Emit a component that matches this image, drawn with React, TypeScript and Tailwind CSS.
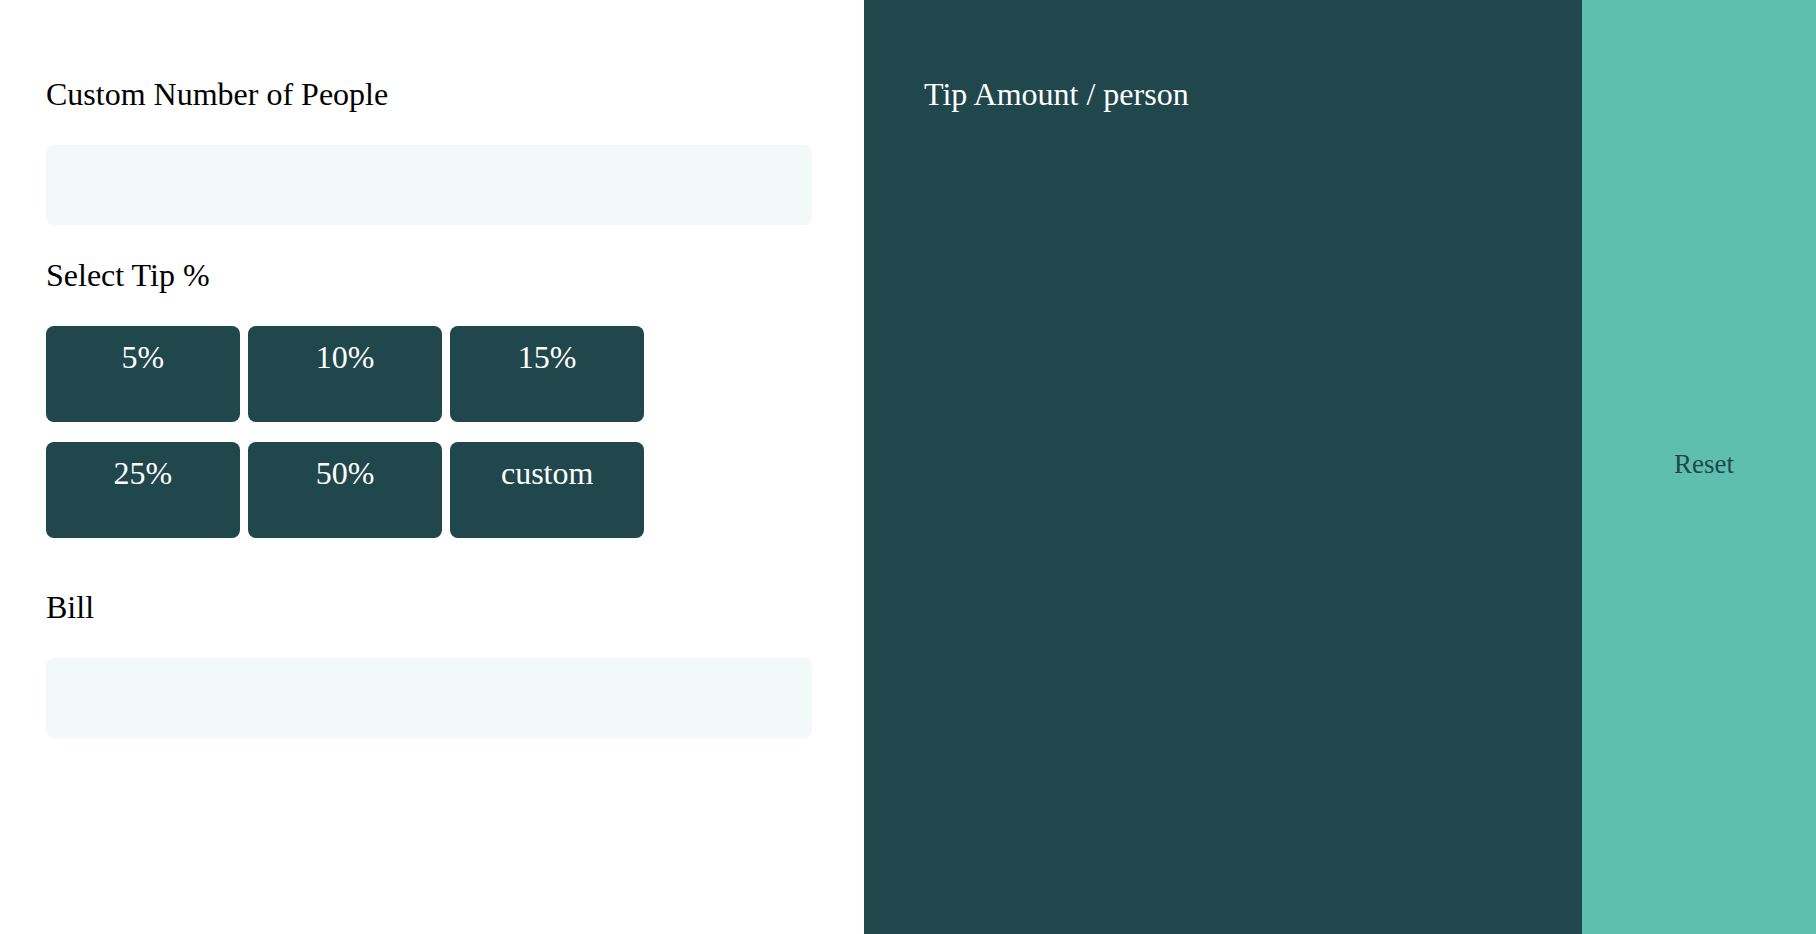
const tips = ['5%', '10%', '15%', '25%', '50%', 'custom']

const serif = 'font-["Liberation_Serif","Times_New_Roman",serif]'

export default function App() {
  return (
    <div className={`flex h-[934px] w-full overflow-hidden ${serif}`}>
      {/* Inputs */}
      <div className="w-[864px] shrink-0 bg-white pl-[46px] pt-[76px]">
        <label className="block text-[32px] leading-[37px] text-black">Custom Number of People</label>
        <div className="mt-[32px] h-[80px] w-[766px] rounded-[8px] bg-[#f3f8f9]" />

        <label className="mt-[32px] block text-[32px] leading-[37px] text-black">Select Tip %</label>
        <div className="mt-[32px] grid w-[598px] grid-cols-3 gap-x-[8.5px] gap-y-[20px]">
          {tips.map((tip) => (
            <button
              key={tip}
              className="flex h-[96px] items-start justify-center rounded-[8px] bg-[#1f474c] pt-[13px] text-[32px] leading-[37px] text-white"
            >
              {tip}
            </button>
          ))}
        </div>

        <label className="mt-[51px] block text-[32px] leading-[37px] text-black">Bill</label>
        <div className="mt-[32px] h-[80px] w-[766px] rounded-[8px] bg-[#f3f8f9]" />
      </div>

      {/* Result */}
      <div className="w-[718px] shrink-0 bg-[#1f474c] pl-[60px] pt-[76px]">
        <div className="text-[32px] leading-[37px] text-white">Tip Amount / person</div>
      </div>

      {/* Reset */}
      <div className="flex flex-1 items-center justify-center bg-[#5ebfae] pb-[5px] pl-[10px]">
        <span className="text-[27px] leading-[31px] text-[#1f474c]">Reset</span>
      </div>
    </div>
  )
}
